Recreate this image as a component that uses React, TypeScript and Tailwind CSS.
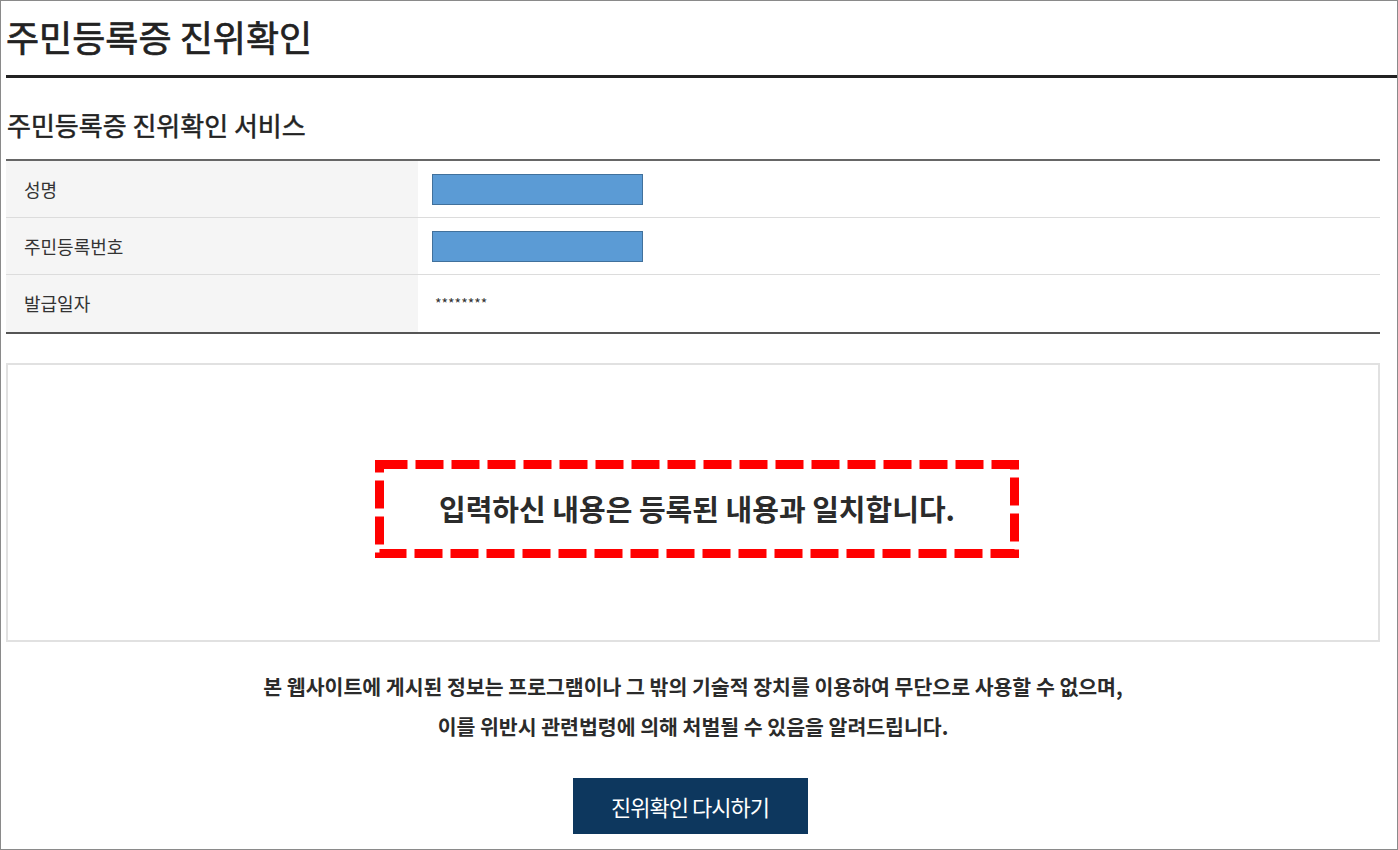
import React from "react";

const rows = [
  { label: "성명", masked: true },
  { label: "주민등록번호", masked: true },
  { label: "발급일자", masked: false },
];

const App = () => {
  return (
    <div
      className="w-[1398px] h-[850px] overflow-hidden border border-[#8a8a8a] bg-white text-[#222]"
      style={{ fontFamily: '"Noto Sans CJK KR", "Noto Sans", sans-serif' }}
    >
      <div className="pl-[5px]">
        {/* page title */}
        <h1 className="border-b-[3px] border-[#222] pt-[9px] pb-[12px] text-[36px] leading-[53px] font-normal [-webkit-text-stroke:0.7px_#222]">
          주민등록증 진위확인
        </h1>

        <div className="pr-[17px]">
          <h2 className="mt-[29px] pl-[1px] text-[26px] leading-[36px] font-normal [-webkit-text-stroke:0.5px_#222]">
            주민등록증 진위확인 서비스
          </h2>

          {/* info table */}
          <div className="mt-[16px] border-t-2 border-b-2 border-t-[#666] border-b-[#555]">
            {rows.map((row, i) => (
              <div
                key={row.label}
                className={`flex h-[57px] ${i < rows.length - 1 ? "border-b border-[#dcdcdc]" : ""}`}
              >
                <div className="flex w-[412px] items-center bg-[#f5f5f5] pl-[18px] text-[18px] text-[#333]">
                  {row.label}
                </div>
                <div className="flex flex-1 items-center pl-[14px]">
                  {row.masked ? (
                    <div className="h-[31px] w-[211px] border border-[#41719c] bg-[#5b9bd5]" />
                  ) : (
                    <span className="pl-[3px] text-[14px] text-[#333]">********</span>
                  )}
                </div>
              </div>
            ))}
          </div>

          {/* result box */}
          <div className="mt-[29px] flex justify-center border-2 border-[#e1e1e1] pt-[95px] pb-[82px] pl-[8px]">
            <div className="relative flex h-[98px] w-[644px] items-center justify-center">
              <svg className="absolute inset-0" width="644" height="98" viewBox="0 0 644 98">
                <rect
                  x="4.5"
                  y="4.5"
                  width="635"
                  height="89"
                  fill="none"
                  stroke="#ff0000"
                  strokeWidth="9"
                  strokeDasharray="28 8"
                />
              </svg>
              <p className="text-[29px] font-bold text-[#2b2b2b]">입력하신 내용은 등록된 내용과 일치합니다.</p>
            </div>
          </div>

          {/* notice */}
          <div className="mt-[24px] text-center text-[20.5px] leading-[40px] font-bold text-[#2b2b2b]">
            <p>본 웹사이트에 게시된 정보는 프로그램이나 그 밖의 기술적 장치를 이용하여 무단으로 사용할 수 없으며,</p>
            <p>이를 위반시 관련법령에 의해 처벌될 수 있음을 알려드립니다.</p>
          </div>

          <div className="mt-[32px] flex justify-center pr-[6px]">
            <button className="h-[56px] w-[235px] bg-[#0d375e] text-[22px] tracking-[-1px] text-white">
              진위확인 다시하기
            </button>
          </div>
        </div>
      </div>
    </div>
  );
};

export default App;
